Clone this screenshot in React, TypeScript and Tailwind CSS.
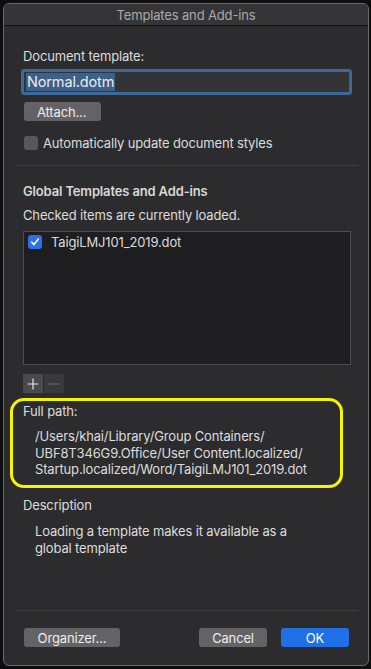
import React from "react";

const font = { fontFamily: "Inter, 'Noto Sans', sans-serif" };

export default function App() {
  return (
    <div className="w-[371px] h-[669px] bg-[#0e0e0e] pl-[3px] pt-[3px] overflow-hidden" style={font}>
      <div className="w-[366px] h-[663px] rounded-[6px] border border-[#6a6a6a] bg-[#2c2c2e] flex flex-col overflow-hidden text-[13px] tracking-[-0.15px] text-[#dcdcdc] leading-4">
        {/* Title bar */}
        <div className="h-[22px] shrink-0 bg-[#353537] border-b border-[#111] flex items-center justify-center text-[13px] text-[#a9a9a9]">
          Templates and Add-ins
        </div>

        <div className="mt-[22px] ml-[19px] h-4">Document template:</div>

        <div className="mt-[5px] ml-[17px] w-[331px] h-[26px] border-[3px] border-[#3b6a9a] rounded-[3px] bg-[#343436] flex items-center pl-[2px]">
          <span className="bg-[#3d5f88] text-[#ececec] px-[1px] h-[18px] leading-[18px] text-[14.5px]">Normal.dotm</span>
        </div>

        <div className="mt-[7px] ml-[20px] w-[77px] h-[19px] rounded-[3px] bg-[#636365] flex items-center pl-[13px] text-[#ececec]">
          Attach...
        </div>

        <div className="mt-[14px] ml-[20px] h-4 flex items-center gap-[5px]">
          <div className="w-[14px] h-[14px] rounded-[3px] bg-[#58585a]" />
          <span>Automatically update document styles</span>
        </div>

        <div className="mt-[14px] ml-[12px] w-[342px] h-px bg-[#3f3f41]" />

        <div className="mt-[17px] ml-[19px] h-4 font-semibold text-[#d8d8d8]">Global Templates and Add-ins</div>
        <div className="mt-[8px] ml-[19px] h-4">Checked items are currently loaded.</div>

        <div className="mt-[8px] ml-[19px] w-[328px] h-[134px] bg-[#1e1e20] border border-[#4c4c4e] pt-[3px] pl-[4px]">
          <div className="flex items-center gap-[9px] h-[14px]">
            <div className="w-[14px] h-[14px] rounded-[3px] bg-[#2f6fe8] flex items-center justify-center">
              <svg width="10" height="10" viewBox="0 0 10 10">
                <path d="M1.8 5.2 L4 7.6 L8.4 2" fill="none" stroke="#fff" strokeWidth="1.6" strokeLinecap="round" strokeLinejoin="round" />
              </svg>
            </div>
            <span>TaigiLMJ101_2019.dot</span>
          </div>
        </div>

        <div className="mt-[9px] ml-[19px] flex h-[19px] gap-px">
          <div className="w-[20px] h-[19px] bg-[#4a4a4c] flex items-center justify-center">
            <svg width="12" height="12" viewBox="0 0 12 12">
              <path d="M6 0.5 V11.5 M0.5 6 H11.5" stroke="#e6e6e6" strokeWidth="1.2" />
            </svg>
          </div>
          <div className="w-[20px] h-[19px] bg-[#3a3a3c] flex items-center justify-center">
            <svg width="12" height="12" viewBox="0 0 12 12">
              <path d="M0.5 6 H11.5" stroke="#6a6a6a" strokeWidth="1.2" />
            </svg>
          </div>
        </div>

        <div className="mt-[5px] ml-[6px] w-[333px] h-[90px] border-[3px] border-[#f5f500] rounded-[14px] pl-[10px] pt-[2px]">
          <div className="h-4">Full path:</div>
          <div className="mt-[9px] ml-[12px] leading-[16.5px]">
            <div>/Users/khai/Library/Group Containers/</div>
            <div>UBF8T346G9.Office/User Content.localized/</div>
            <div>Startup.localized/Word/TaigiLMJ101_2019.dot</div>
          </div>
        </div>

        <div className="mt-[9px] ml-[19px] h-4">Description</div>
        <div className="mt-[10px] ml-[31px] leading-[16.5px]">
          <div>Loading a template makes it available as a</div>
          <div>global template</div>
        </div>

        <div className="mt-[54px] ml-[12px] w-[342px] h-px bg-[#3f3f41]" />

        <div className="mt-[17px] ml-[20px] mr-[19px] flex items-center h-[19px]">
          <div className="w-[96px] h-[19px] rounded-[3px] bg-[#636365] flex items-center justify-center text-[#ececec]">Organizer...</div>
          <div className="flex-1" />
          <div className="w-[68px] h-[19px] rounded-[3px] bg-[#636365] flex items-center justify-center text-[#ececec]">Cancel</div>
          <div className="ml-[14px] w-[68px] h-[19px] rounded-[3px] bg-[#1f6fe6] flex items-center justify-center text-white">OK</div>
        </div>
      </div>
    </div>
  );
}
